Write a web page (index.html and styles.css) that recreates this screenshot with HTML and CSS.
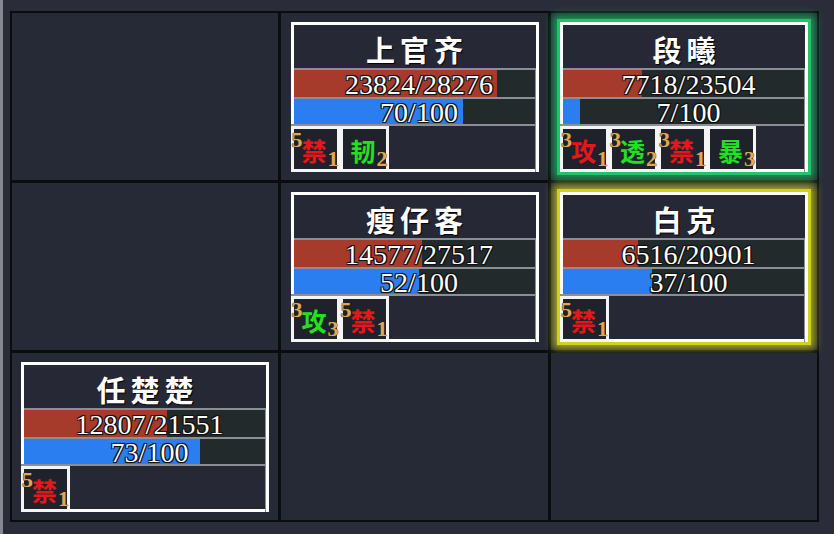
FILE: index.html
```html
<!DOCTYPE html>
<html lang="zh">
<head>
<meta charset="utf-8">
<title>阵容</title>
<link rel="stylesheet" href="styles.css">
</head>
<body>
<div class="page">
  <div class="grid">
    <div class="cell"></div>
    <div class="cell">
      <div class="card">
        <div class="name">上官齐</div>
        <div class="bar hp" style="--p:84.25%">23824/28276</div>
        <div class="bar mp" style="--p:70%">70/100</div>
        <div class="buffs">
          <div class="buff"><span class="sup">5</span><span class="ch red">禁</span><span class="sub">1</span></div>
          <div class="buff"><span class="sup"></span><span class="ch green">韧</span><span class="sub">2</span></div>
        </div>
      </div>
    </div>
    <div class="cell">
      <div class="card glow-green">
        <div class="name">段曦</div>
        <div class="bar hp" style="--p:32.84%">7718/23504</div>
        <div class="bar mp" style="--p:7%">7/100</div>
        <div class="buffs">
          <div class="buff"><span class="sup">3</span><span class="ch red">攻</span><span class="sub">1</span></div>
          <div class="buff"><span class="sup">3</span><span class="ch green">透</span><span class="sub">2</span></div>
          <div class="buff"><span class="sup">3</span><span class="ch red">禁</span><span class="sub">1</span></div>
          <div class="buff"><span class="sup"></span><span class="ch green">暴</span><span class="sub">3</span></div>
        </div>
      </div>
    </div>
    <div class="cell"></div>
    <div class="cell">
      <div class="card">
        <div class="name">瘦仔客</div>
        <div class="bar hp" style="--p:52.97%">14577/27517</div>
        <div class="bar mp" style="--p:52%">52/100</div>
        <div class="buffs">
          <div class="buff"><span class="sup">3</span><span class="ch green">攻</span><span class="sub">3</span></div>
          <div class="buff"><span class="sup">5</span><span class="ch red">禁</span><span class="sub">1</span></div>
        </div>
      </div>
    </div>
    <div class="cell">
      <div class="card glow-yellow">
        <div class="name">白克</div>
        <div class="bar hp" style="--p:31.17%">6516/20901</div>
        <div class="bar mp" style="--p:37%">37/100</div>
        <div class="buffs">
          <div class="buff"><span class="sup">5</span><span class="ch red">禁</span><span class="sub">1</span></div>
        </div>
      </div>
    </div>
    <div class="cell">
      <div class="card">
        <div class="name">任楚楚</div>
        <div class="bar hp" style="--p:59.43%">12807/21551</div>
        <div class="bar mp" style="--p:73%">73/100</div>
        <div class="buffs">
          <div class="buff"><span class="sup">5</span><span class="ch red">禁</span><span class="sub">1</span></div>
        </div>
      </div>
    </div>
    <div class="cell"></div>
    <div class="cell"></div>
  </div>
</div>
</body>
</html>
```

FILE: styles.css
```css
html, body {
  margin: 0;
  padding: 0;
  background: #2a2d39;
}

.page {
  width: 834px;
  height: 534px;
  box-sizing: border-box;
  background: #2a2d39;
  border-left: 3px solid #858891;
  padding: 11px 0 0 7px;
  overflow: hidden;
}

.grid {
  display: grid;
  grid-template-columns: 266px 267px 266px;
  grid-template-rows: 167px 167px 167px;
  gap: 3px;
  padding: 2px;
  width: fit-content;
  background: #0a0c10;
}

.cell {
  background: #262936;
  display: flex;
  align-items: center;
  justify-content: center;
}

.card {
  width: 248px;
  height: 150px;
  box-sizing: border-box;
  border: 3px solid #ffffff;
  background: #262935;
  display: flex;
  flex-direction: column;
}

.glow-green {
  box-shadow: 0 0 0 3px #22c468, 0 0 8px 7px rgba(26, 180, 96, 0.8);
}

.glow-yellow {
  box-shadow: 0 0 0 3px #d2d21e, 0 0 8px 7px rgba(200, 200, 26, 0.8);
}

.name {
  height: 43px;
  box-sizing: border-box;
  padding: 6px 0 0 5px;
  display: flex;
  align-items: center;
  justify-content: center;
  font-family: "Noto Sans CJK SC", sans-serif;
  font-weight: 700;
  font-size: 29px;
  letter-spacing: 5px;
  color: #ffffff;
  text-shadow: 1px 1px 1px #000;
}

.bar {
  box-sizing: border-box;
  border-top: 2px solid #8a8e95;
  border-right: 1px solid #8a8e95;
  padding: 2px 0 0 10px;
  text-align: center;
  font-family: "Liberation Serif", serif;
  font-size: 28px;
  color: #ffffff;
  text-shadow: -1px -1px 0 #101010, 1px -1px 0 #101010, -1px 1px 0 #101010, 1px 1px 0 #101010, 0 0 2px #000;
}

.hp {
  height: 29px;
  line-height: 26px;
  background: linear-gradient(to right, #a63b2c var(--p), #222a2c var(--p));
}

.mp {
  height: 27px;
  line-height: 24px;
  background: linear-gradient(to right, #2a7eef var(--p), #222a2c var(--p));
}

.buffs {
  flex: 1;
  display: flex;
  border-top: 2px solid #8a8e95;
  border-right: 1px solid #8a8e95;
  margin: 0 0 -3px -3px;
}

.buff {
  width: 49px;
  box-sizing: border-box;
  border: 3px solid #f4f4f4;
  background: #1f222b;
  display: flex;
  justify-content: flex-start;
}

.sup, .sub {
  width: 9px;
  font-family: "Liberation Serif", serif;
  font-weight: 700;
  font-size: 22px;
  line-height: 20px;
  color: #dca85a;
  text-shadow: 0 0 1px #3a2a10, 0 0 1px #3a2a10;
}

.sup {
  align-self: flex-start;
  margin-top: 1px;
  margin-left: -2px;
}

.sub {
  align-self: flex-end;
  margin-bottom: 0;
}

.ch {
  width: 27px;
  text-align: center;
  align-self: center;
  font-family: "Noto Sans CJK SC", sans-serif;
  font-weight: 700;
  font-size: 25px;
  line-height: 28px;
  margin-top: 3px;
}

.red {
  color: #e5171b;
}

.green {
  color: #22e022;
}
```
